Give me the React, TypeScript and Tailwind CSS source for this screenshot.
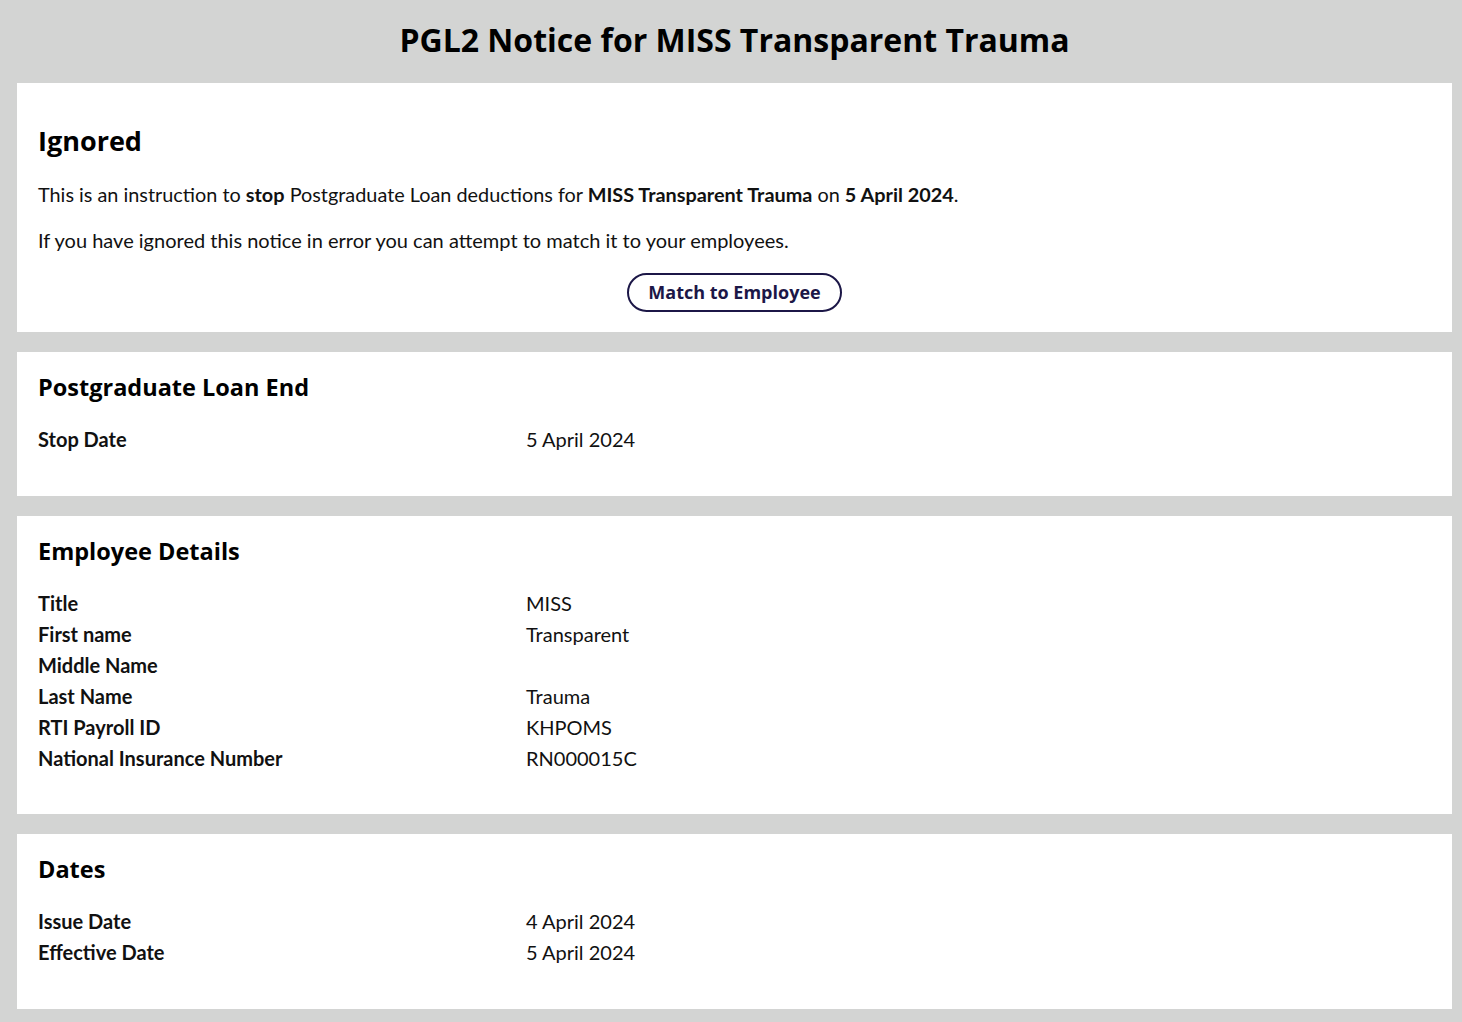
const heading = "font-['Open_Sans',sans-serif] font-bold text-black";

function Row({ label, value }: { label: string; value: string }) {
  return (
    <div className="grid grid-cols-[488px_1fr] h-[31px] items-center">
      <div className="font-bold">{label}</div>
      <div>{value}</div>
    </div>
  );
}

function Card({ title, className, children }: { title: string; className: string; children: React.ReactNode }) {
  return (
    <section className={`bg-white px-[21px] pt-[21px] ${className}`}>
      <h2 className={`${heading} text-[23.5px] leading-[28px] mb-[22px]`}>{title}</h2>
      {children}
    </section>
  );
}

export default function App() {
  return (
    <div className="min-h-screen bg-[#d3d4d3] pl-[17px] pr-[10px] pb-[13px] font-['Lato',sans-serif] text-[20px] text-[#111]">
      <h1 className={`${heading} text-[32px] leading-[79px] h-[83px] text-center`}>
        PGL2 Notice for MISS Transparent Trauma
      </h1>
      <div className="flex flex-col gap-[20px]">
        <section className="bg-white px-[21px] pt-[40px] h-[249px]">
          <h2 className={`${heading} text-[27px] leading-[36px] mb-[23px]`}>Ignored</h2>
          <p className="leading-[24px] text-[19.85px]">
            This is an instruction to <b>stop</b> Postgraduate Loan deductions for{" "}
            <b>MISS Transparent Trauma</b> on <b>5 April 2024</b>.
          </p>
          <p className="leading-[24px] mt-[22px]">
            If you have ignored this notice in error you can attempt to match it to your employees.
          </p>
          <div className="flex justify-center mt-[21px]">
            <button className="h-[39px] w-[215px] rounded-full border-2 border-[#1c1747] text-[#1c1747] font-['Open_Sans',sans-serif] font-bold text-[18px]">
              Match to Employee
            </button>
          </div>
        </section>
        <Card title="Postgraduate Loan End" className="h-[144px]">
          <Row label="Stop Date" value="5 April 2024" />
        </Card>
        <Card title="Employee Details" className="h-[298px]">
          <Row label="Title" value="MISS" />
          <Row label="First name" value="Transparent" />
          <Row label="Middle Name" value="" />
          <Row label="Last Name" value="Trauma" />
          <Row label="RTI Payroll ID" value="KHPOMS" />
          <Row label="National Insurance Number" value="RN000015C" />
        </Card>
        <Card title="Dates" className="h-[175px]">
          <Row label="Issue Date" value="4 April 2024" />
          <Row label="Effective Date" value="5 April 2024" />
        </Card>
      </div>
    </div>
  );
}
